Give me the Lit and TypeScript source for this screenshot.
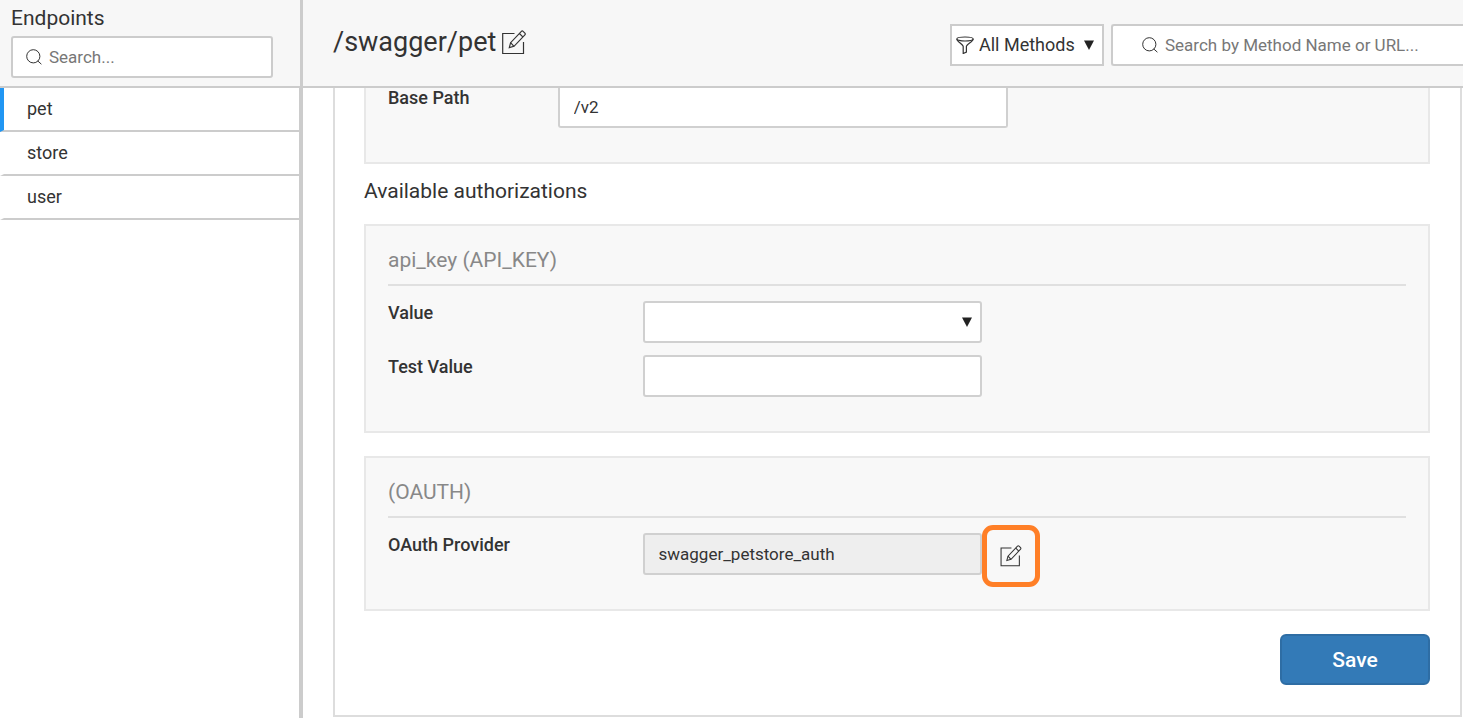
import { LitElement, html, css, svg } from "lit";
import { customElement, state } from "lit/decorators.js";
import { classMap } from "lit/directives/class-map.js";

const editIcon = html`<svg class="edit-icon" viewBox="0 0 24 25" aria-hidden="true">
  ${svg`<path d="M12.500 3.500H0.700V23.500H21.500V12" /><path d="M7.300 17.600l1.300-4.900L19.400 1.300a1.200 1.200 0 0 1 1.700 0l1.800 1.800a1.200 1.200 0 0 1 0 1.700L12 16.300z" /><path d="M17.400 3.500l3.400 3.400M8.600 12.700l3.400 3.600" />`}
</svg>`;

const searchIcon = html`<svg class="search-icon" viewBox="0 0 16 16" aria-hidden="true">
  ${svg`<circle cx="7.3" cy="7.3" r="6.6" /><path d="M11.8 12l3.6 3.2" />`}
</svg>`;

const filterIcon = html`<svg class="filter-icon" viewBox="0 0 18 18" aria-hidden="true">
  ${svg`<ellipse cx="9" cy="3" rx="8.200" ry="2" /><path d="M0.800 3.200C1 5.500 7.200 8.500 7.200 10.500v7l3.200-1.500V10.500C10.400 8.500 17 5.500 17.200 3.200" />`}
</svg>`;

const arrowIcon = html`<svg class="arrow" viewBox="0 0 10 10" aria-hidden="true">
  ${svg`<path d="M0 0.500H10L5 10Z" />`}
</svg>`;

@customElement("app-root")
export class AppRoot extends LitElement {
  @state() private selected = "pet";
  private endpoints = ["pet", "store", "user"];

  static styles = css`
    :host {
      display: grid;
      grid-template: 88px minmax(0, 1fr) / 303px minmax(0, 1fr);
      height: 100vh;
      overflow: hidden;
      background: #fff;
      color: #333;
      font: 18px/24px Roboto, sans-serif;
    }
    * {
      box-sizing: border-box;
    }
    h1, h2, h3 {
      margin: 0;
      font-weight: 400;
    }
    input, select, button {
      font: inherit;
      color: inherit;
      margin: 0;
    }
    svg {
      flex: none;
      fill: none;
      stroke: #333;
    }
    .side-head, .main-head {
      background: #f7f7f7;
      border-bottom: 2px solid #ccc;
    }
    .side-head {
      border-right: 3px solid #ccc;
      padding: 4px 27px 0 11px;
    }
    .side-title {
      font-size: 21px;
      line-height: 28px;
    }
    .search {
      display: flex;
      align-items: center;
      gap: 7px;
      height: 42px;
      padding: 0 13px;
      background: #fff;
      border: 2px solid #ccc;
      border-radius: 3px;
    }
    .side-head .search {
      margin-top: 4px;
    }
    .search input {
      flex: 1;
      min-width: 0;
      padding: 0;
      border: 0;
      background: none;
      font-size: 17px;
    }
    .search input::placeholder {
      color: #777;
      opacity: 1;
    }
    .search-icon {
      width: 16px;
      height: 16px;
    }
    .main-head {
      display: flex;
      align-items: flex-start;
      gap: 7px;
      padding: 24px 0 0 30px;
      min-width: 0;
    }
    .title {
      display: flex;
      align-items: center;
      gap: 6px;
      flex: 1;
    }
    .title h1 {
      font-size: 27px;
      line-height: 36px;
    }
    .icon-button {
      display: flex;
      padding: 0;
      border: 0;
      background: none;
    }
    .edit-icon {
      width: 24px;
      height: 25px;
      stroke-width: 1.2;
    }
    .methods {
      position: relative;
      display: flex;
      align-items: center;
      width: 154px;
      height: 42px;
      padding-left: 4px;
      background: #fff;
      border: 2px solid #ccc;
    }
    .filter-icon {
      width: 18px;
      height: 18px;
      stroke-width: 1.2;
    }
    .methods select {
      flex: 1;
      min-width: 0;
      height: 38px;
      padding: 0 0 0 5px;
      border: 0;
      background: none;
      appearance: none;
    }
    .arrow {
      position: absolute;
      right: 8px;
      width: 10px;
      height: 10px;
      fill: #222;
      stroke: none;
      pointer-events: none;
    }
    .field .arrow {
      right: 10px;
    }
    .main-search {
      width: 352px;
      padding-left: 29px;
      border-right: 0;
      border-radius: 3px 0 0 3px;
    }
    .side {
      border-right: 4px solid #ccc;
    }
    .item {
      display: block;
      height: 44px;
      padding: 0 23px;
      line-height: 42px;
      border-left: 4px solid transparent;
      border-bottom: 2px solid #ccc;
      color: inherit;
      text-decoration: none;
    }
    .item.active {
      border-left-color: #2196f3;
    }
    .content {
      min-height: 0;
      overflow: hidden;
      padding: 0 1px 0 30px;
    }
    .card {
      padding: 0 30px 30px 29px;
      border: 2px solid #ddd;
      border-top: 0;
    }
    .panel {
      padding: 20px 22px 34px;
      margin-bottom: 23px;
      background: #f8f8f8;
      border: 2px solid #e8e8e8;
    }
    .panel.first {
      padding-top: 0;
      margin-bottom: 13px;
      border-top: 0;
    }
    .section {
      margin-bottom: 19px;
      font-size: 21px;
      line-height: 28px;
    }
    .panel h3 {
      padding-bottom: 10px;
      margin-bottom: 15px;
      border-bottom: 2px solid #e0e0e0;
      color: #888;
      font-size: 21px;
      line-height: 28px;
    }
    .row {
      display: grid;
      grid-template-columns: 3fr 4fr 5fr;
      align-items: start;
    }
    .row + .row {
      margin-top: 12px;
    }
    .first .row {
      grid-template-columns: 2fr 10fr;
    }
    .row label {
      font-weight: 500;
    }
    .first label {
      line-height: 20px;
    }
    .field {
      position: relative;
      display: flex;
      align-items: center;
    }
    .control {
      width: 100%;
      height: 42px;
      padding: 0 14px;
      background: #fff;
      border: 2px solid #d0d0d0;
      border-radius: 3px;
      font-size: 17px;
      appearance: none;
    }
    .control[readonly] {
      background: #eee;
    }
    .first .control {
      height: 40px;
      max-width: 450px;
      border-top: 0;
      border-radius: 0 0 3px 3px;
    }
    .marked {
      display: flex;
      align-items: center;
      justify-content: center;
      width: 58px;
      height: 62px;
      padding: 0;
      margin: -8px 0 -12px;
      background: none;
      border: 5px solid #ff7f27;
      border-radius: 11px;
    }
    .marked .edit-icon {
      width: 22px;
      height: 22px;
    }
    .save {
      display: block;
      width: 150px;
      height: 51px;
      margin-left: auto;
      background: #337ab7;
      border: 2px solid #2e6da4;
      border-radius: 6px;
      color: #fff;
      font-size: 21px;
      font-weight: 500;
    }
  `;

  render() {
    return html`
      <header class="side-head">
        <h2 class="side-title">Endpoints</h2>
        <label class="search">
          ${searchIcon}
          <input type="text" placeholder="Search..." aria-label="Search endpoints" />
        </label>
      </header>
      <header class="main-head">
        <div class="title">
          <h1>/swagger/${this.selected}</h1>
          <button class="icon-button" aria-label="Edit name">${editIcon}</button>
        </div>
        <div class="methods">
          ${filterIcon}
          <select aria-label="Methods"><option>All Methods</option></select>
          ${arrowIcon}
        </div>
        <label class="search main-search">
          ${searchIcon}
          <input type="text" placeholder="Search by Method Name or URL..." aria-label="Search methods" />
        </label>
      </header>
      <nav class="side">
        ${this.endpoints.map(
          (name) => html`<a
            href="#${name}"
            class=${classMap({ item: true, active: name === this.selected })}
            @click=${() => (this.selected = name)}
            >${name}</a
          >`
        )}
      </nav>
      <main class="content">
        <div class="card">
          <section class="panel first">
            <div class="row">
              <label for="base">Base Path</label>
              <input id="base" class="control" type="text" value="/v2" />
            </div>
          </section>
          <h2 class="section">Available authorizations</h2>
          <section class="panel">
            <h3>api_key (API_KEY)</h3>
            <div class="row">
              <label for="value">Value</label>
              <div class="field">
                <select id="value" class="control"><option></option></select>
                ${arrowIcon}
              </div>
            </div>
            <div class="row">
              <label for="test">Test Value</label>
              <input id="test" class="control" type="text" />
            </div>
          </section>
          <section class="panel">
            <h3>(OAUTH)</h3>
            <div class="row">
              <label for="provider">OAuth Provider</label>
              <input id="provider" class="control" type="text" readonly value="swagger_petstore_auth" />
              <button class="marked" aria-label="Edit provider">${editIcon}</button>
            </div>
          </section>
          <button class="save">Save</button>
        </div>
      </main>
    `;
  }
}
